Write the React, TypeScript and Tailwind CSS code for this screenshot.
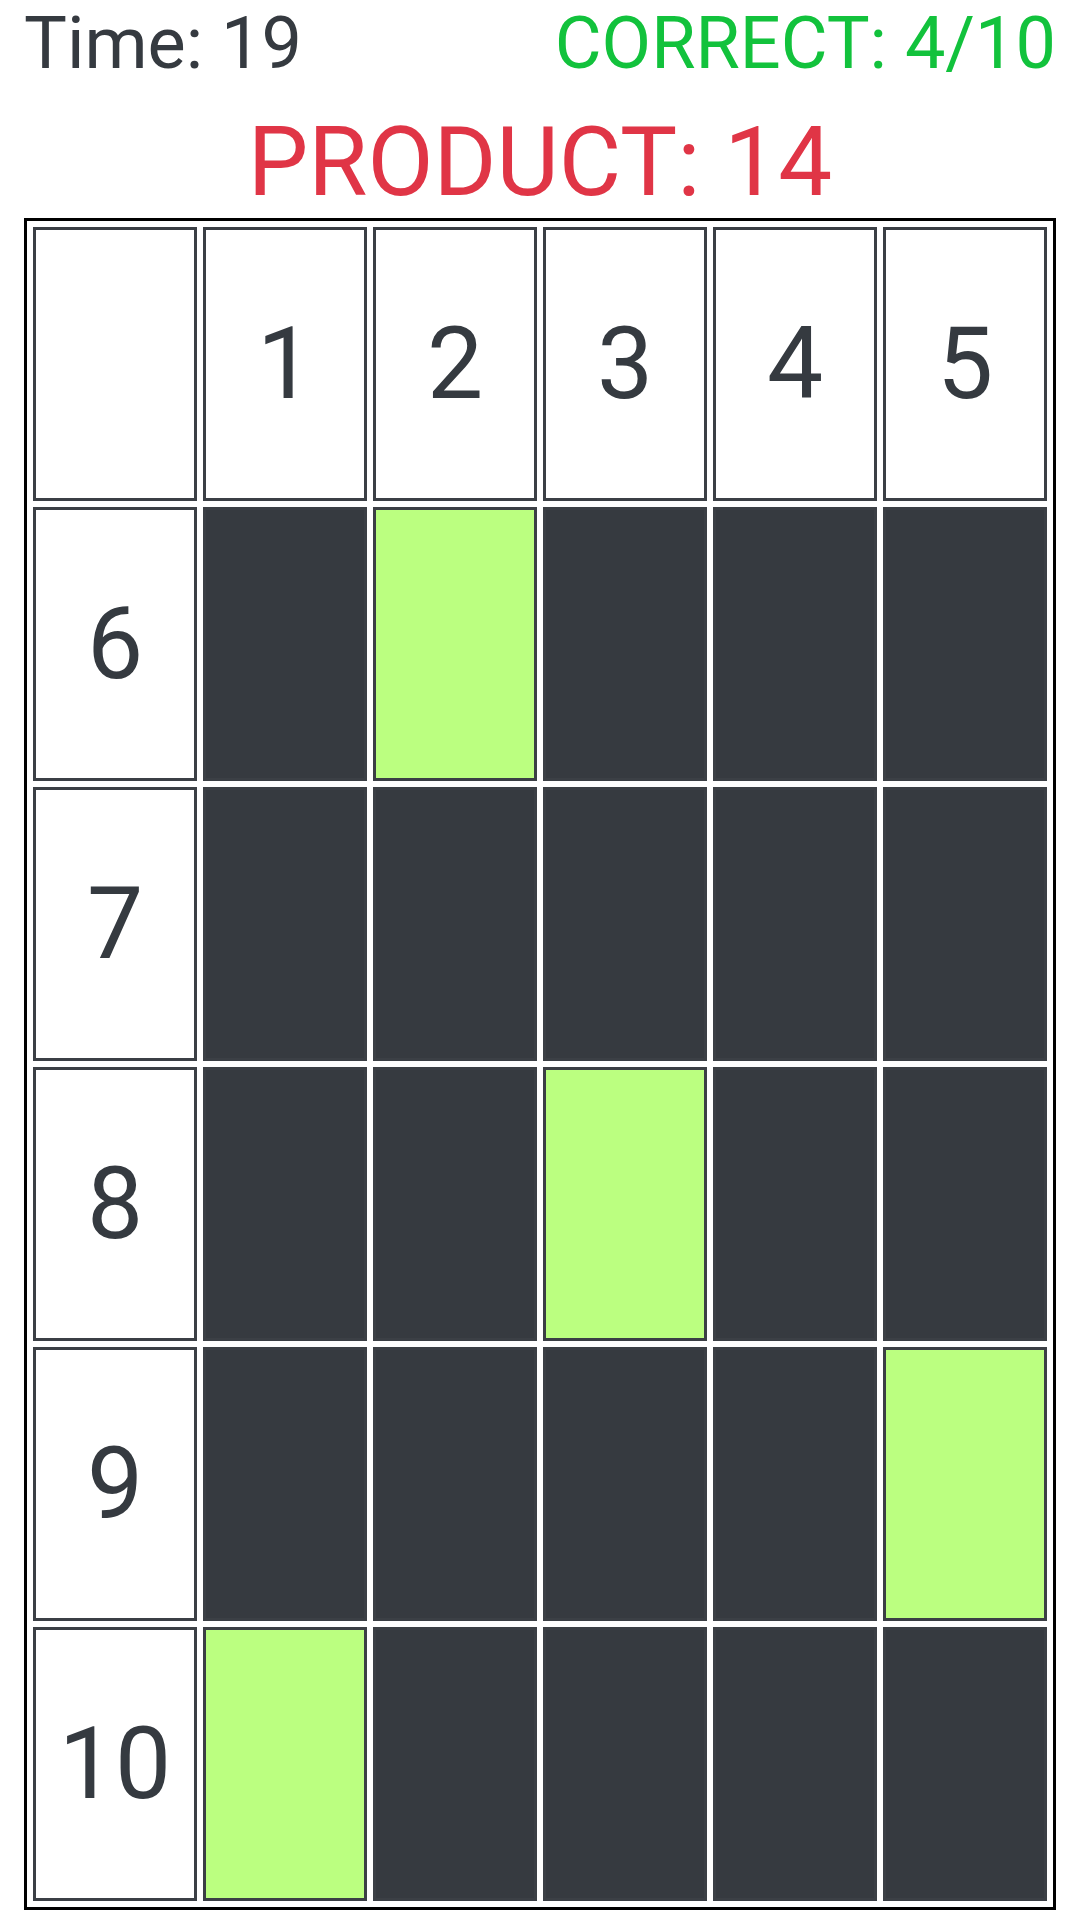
import React from "react";

const COLS = [1, 2, 3, 4, 5];
const ROWS = [6, 7, 8, 9, 10];
// which column is lit green for each row
const HITS: Record<number, number> = { 6: 2, 8: 3, 9: 5, 10: 1 };

function Cell({ children, kind }: { children?: React.ReactNode; kind: "label" | "dark" | "hit" }) {
  const base = "flex items-center justify-center border-[3px] border-[#3b3f45] text-[100px] leading-none text-[#353a40]";
  if (kind === "label") return <div className={base + " bg-white"}>{children}</div>;
  if (kind === "hit") return <div className={base + " bg-[#bbff80]"} />;
  return <div className={base + " bg-[#363a40]"} />;
}

export default function App() {
  return (
    <div className="w-[1080px] h-[1920px] bg-white px-6 font-['Roboto','Liberation_Sans',sans-serif]">
      <div className="flex justify-between pt-[2px] text-[72px] leading-[84px]">
        <span className="text-[#353a40]">Time: 19</span>
        <span className="text-[#12c23c]">CORRECT: 4/10</span>
      </div>
      <div className="mt-5 text-center text-[96px] leading-[112px] text-[#e03546]">PRODUCT: 14</div>

      <div className="border-[3px] border-black p-[6px]">
        <div className="grid grid-cols-6 grid-rows-[repeat(6,274px)] gap-[6px]">
          <Cell kind="label" />
          {COLS.map((c) => (
            <Cell key={c} kind="label">{c}</Cell>
          ))}
          {ROWS.map((r) => (
            <React.Fragment key={r}>
              <Cell kind="label">{r}</Cell>
              {COLS.map((c) => (
                <Cell key={c} kind={HITS[r] === c ? "hit" : "dark"} />
              ))}
            </React.Fragment>
          ))}
        </div>
      </div>
    </div>
  );
}
